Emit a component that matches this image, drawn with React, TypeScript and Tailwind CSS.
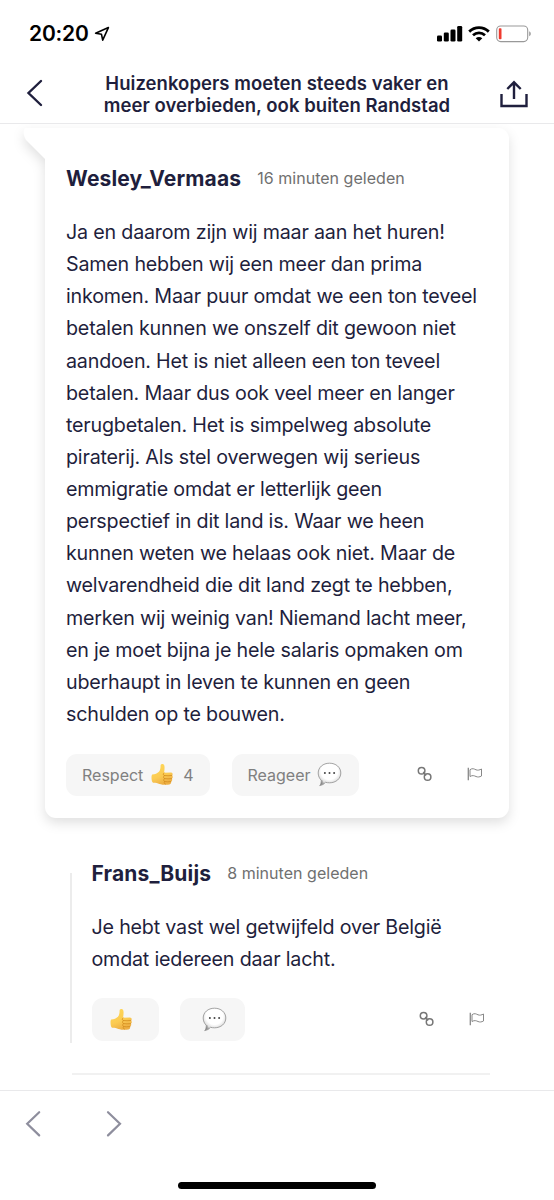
import type { ReactNode } from "react";

const article = ["Huizenkopers moeten steeds vaker en", "meer overbieden, ook buiten Randstad"];

const mainComment = [
  "Ja en daarom zijn wij maar aan het huren!",
  "Samen hebben wij een meer dan prima",
  "inkomen. Maar puur omdat we een ton teveel",
  "betalen kunnen we onszelf dit gewoon niet",
  "aandoen. Het is niet alleen een ton teveel",
  "betalen. Maar dus ook veel meer en langer",
  "terugbetalen. Het is simpelweg absolute",
  "piraterij. Als stel overwegen wij serieus",
  "emmigratie omdat er letterlijk geen",
  "perspectief in dit land is. Waar we heen",
  "kunnen weten we helaas ook niet. Maar de",
  "welvarendheid die dit land zegt te hebben,",
  "merken wij weinig van! Niemand lacht meer,",
  "en je moet bijna je hele salaris opmaken om",
  "uberhaupt in leven te kunnen en geen",
  "schulden op te bouwen.",
];

const reply = ["Je hebt vast wel getwijfeld over België", "omdat iedereen daar lacht."];

function ThumbsUp() {
  return (
    <svg width="23" height="23" viewBox="0 0 24 24" className="shrink-0">
      <defs>
        <linearGradient id="thumb" x1="0" y1="0" x2="0.4" y2="1">
          <stop offset="0" stopColor="#ffd95a" />
          <stop offset="0.65" stopColor="#fbcb52" />
          <stop offset="1" stopColor="#eeb045" />
        </linearGradient>
      </defs>
      <path
        d="M1.2 12.1C4.2 11.8 6.6 11 8.3 9.2C9.8 7.6 10 5 10 2.7C10.2.5 13.6.6 14 3C14.4 5.1 14 7.9 13.6 10.1L20.7 9.9C22.8 9.9 23.2 12.3 21.8 13C23.2 13.8 23 15.9 21.6 16.3C22.6 17.2 22.2 19 20.8 19.4C21.5 20.6 20.7 22.1 19.2 22.4C16.3 22.8 11.9 22.8 8.8 21.8C6.6 21.1 4.7 20.6 2.1 20.7C.4 19.5.1 13.3 1.2 12.1Z"
        fill="url(#thumb)"
      />
      <path
        d="M14 13.1C16.3 13.5 19.1 13.3 21.8 13M14 16.3C16.4 16.7 19.1 16.6 21.6 16.3M14.2 19.4C16.2 19.8 18.6 19.7 20.8 19.4M13.7 10.3C12.4 11.3 12.5 12.6 14 13.1C12.7 14 12.9 15.6 14 16.3C13 17.1 13.1 18.8 14.2 19.4C13.4 20.4 13.8 21.5 15 22"
        fill="none"
        stroke="#d28b1c"
        strokeWidth="0.8"
        strokeLinecap="round"
      />
    </svg>
  );
}

function SpeechBubble() {
  return (
    <svg width="25" height="25" viewBox="0 0 25 25" className="shrink-0">
      <defs>
        <radialGradient id="bubble" cx="0.5" cy="0.36" r="0.62">
          <stop offset="0.6" stopColor="#fff" />
          <stop offset="0.85" stopColor="#e0e0e0" />
          <stop offset="1" stopColor="#a0a0a0" />
        </radialGradient>
      </defs>
      <path
        d="M12.5 1.2C19 1.2 23.8 5.4 23.8 11C23.8 16.7 19 20.8 12.5 20.8C11 20.8 9.7 20.6 8.5 20.3C7 22 5.2 23.2 2.7 23.6C3.9 22.3 4.4 20.3 4.2 18.2C2.4 16.4 1.2 14 1.2 11C1.2 5.4 6 1.2 12.5 1.2Z"
        fill="url(#bubble)"
        stroke="#999"
        strokeWidth="0.9"
      />
      <path d="M4.9 18.3C5.2 20 4.8 21.7 3.8 22.9" fill="none" stroke="#888" strokeWidth="1" />
      <circle cx="7.9" cy="11" r="1" fill="#444" />
      <circle cx="12.5" cy="11" r="1" fill="#444" />
      <circle cx="17.1" cy="11" r="1" fill="#444" />
    </svg>
  );
}

function LinkIcon() {
  return (
    <svg width="16" height="16" viewBox="0 0 16 16" fill="none" stroke="#777" strokeWidth="1.5">
      <circle cx="4.6" cy="4.7" r="3.3" />
      <circle cx="10.6" cy="11" r="3.3" />
      <path d="M6.2 6.1L9.1 9.6" strokeWidth="1.5" />
    </svg>
  );
}

function FlagIcon() {
  return (
    <svg width="16" height="16" viewBox="0 0 16 16" fill="none" stroke="#888" strokeWidth="1">
      <path d="M1.3 1.8V14.2" strokeWidth="1.3" />
      <path d="M3 3.7C5.5 1.8 7.2 3 9 3.8C10.8 4.5 12.5 4.1 14.5 3V10C12.5 11.1 10.8 11.3 9 10.5C7.2 9.7 5.5 9 3 10.5Z" />
    </svg>
  );
}

function Lines({ lines }: { lines: string[] }) {
  return (
    <p className="text-[19.7px] leading-[32.13px] tracking-[-0.2px]">
      {lines.map((line) => (
        <span key={line} className="block whitespace-nowrap">
          {line}
        </span>
      ))}
    </p>
  );
}

function Author({ name, time }: { name: string; time: string }) {
  return (
    <div className="flex h-8 items-center gap-4 whitespace-nowrap">
      <h2 className="text-[21px] font-bold tracking-[0.15px]">{name}</h2>
      <span className="mt-[-2px] text-[16px] tracking-[0.03px] text-[#707070]">{time}</span>
    </div>
  );
}

function Pill({ className, children }: { className: string; children: ReactNode }) {
  return (
    <button
      className={`flex h-[42.5px] items-center rounded-[11px] bg-[#f6f6f6] text-[16px] text-[#808080] ${className}`}
    >
      {children}
    </button>
  );
}

function StatusBar() {
  return (
    <div className="flex h-[67px] items-center justify-between pr-[22.5px] pl-[29px] text-black">
      <div className="flex items-center gap-[5px]">
        <span className="text-[21px] font-semibold tracking-[-0.2px]">20:20</span>
        <svg width="16" height="16" viewBox="0 0 16 16" fill="none" stroke="currentColor" strokeWidth="1.6">
          <path d="M14.4 1.6L1.6 7.2L7.5 8.3L8.7 14.2Z" strokeLinejoin="round" />
        </svg>
      </div>
      <div className="flex items-center">
        <svg width="26" height="17" viewBox="0 0 26 17" fill="currentColor">
          <rect x="0" y="10.5" width="5" height="6" rx="1.3" />
          <rect x="6.8" y="7.5" width="5" height="9" rx="1.3" />
          <rect x="13.5" y="4.5" width="5" height="12" rx="1.3" />
          <rect x="20.2" y="1" width="5" height="15.5" rx="1.3" />
        </svg>
        <svg width="22" height="16" viewBox="0 0 22 16" fill="none" stroke="currentColor" strokeWidth="2.8" className="mr-[6px] ml-[5px]">
          <path d="M1.2 5.6C6.8.4 15.2.4 20.8 5.6" />
          <path d="M5 9.2C8.5 6 13.5 6 17 9.2" />
          <path d="M11 15.6L7.7 12.2C9.6 10.7 12.4 10.7 14.3 12.2Z" fill="currentColor" stroke="none" />
        </svg>
        <svg width="36" height="18" viewBox="0 0 36 18" fill="none">
          <rect x="0.7" y="1" width="31" height="15.6" rx="4" stroke="#999" strokeWidth="1.1" />
          <rect x="2.8" y="3.3" width="2.7" height="11" rx="0.8" fill="#ef3a2f" />
          <path d="M33.2 6.3C35.3 7.3 35.3 10.3 33.2 11.3Z" fill="#999" />
        </svg>
      </div>
    </div>
  );
}

export default function App() {
  return (
    <div className="flex h-[1200px] w-[554px] flex-col overflow-hidden bg-white font-[Inter,'Liberation_Sans',sans-serif] text-[#1f1f3d]">
      <StatusBar />

      <header className="flex h-[57px] shrink-0 items-center justify-between border-b border-[#e9e9eb] px-[26px]">
        <svg width="17" height="28" viewBox="0 0 17 28" fill="none" stroke="currentColor" strokeWidth="2.4" className="mt-[-4px]">
          <path d="M15 2L2.5 14L15 26" strokeLinecap="round" />
        </svg>
        <h1 className="mt-[-3px] ml-[11px] text-center text-[18.5px] leading-[22px] font-semibold tracking-[0.04px]">
          {article.map((line) => (
            <span key={line} className="block whitespace-nowrap">
              {line}
            </span>
          ))}
        </h1>
        <svg width="28" height="28" viewBox="0 0 28 28" fill="none" stroke="currentColor" strokeWidth="2.4" className="mt-[-3px]">
          <path d="M1.5 14V26H26.5V14" />
          <path d="M14 19V3M7.3 9L14 2.3L20.7 9" />
        </svg>
      </header>

      {/* Highlighted comment */}
      <main className="flex-1 overflow-hidden pt-[4px]">
        {/* One filter on the whole card, so the tail and the body share a single shadow */}
        <article className="relative mr-[45px] ml-[44.5px] h-[689.5px] rounded-r-[11px] rounded-bl-[11px] bg-white px-[21.5px] pt-[35px] drop-shadow-[0_5px_6px_rgba(0,0,0,0.12)]">
          <svg width="44" height="36" viewBox="0 0 44 36" className="absolute top-0 left-[-43px]">
            <path d="M23 0H44V32L24 12Q20 5 23 0Z" fill="#fff" />
          </svg>
          <Author name="Wesley_Vermaas" time="16 minuten geleden" />
          <div className="mt-[21px]">
            <Lines lines={mainComment} />
          </div>
          <div className="mt-[23.5px] flex items-center">
            <Pill className="w-[144px] pl-[16px]">
              <span className="mr-[7.5px]">Respect</span>
              <ThumbsUp />
              <span className="ml-[9.5px]">4</span>
            </Pill>
            <Pill className="ml-[21.5px] w-[127.5px] pl-[16px]">
              <span className="mr-[6.5px]">Reageer</span>
              <SpeechBubble />
            </Pill>
            <div className="mt-[-2px] ml-[58px] flex gap-[34px]">
              <LinkIcon />
              <FlagIcon />
            </div>
          </div>
        </article>

        {/* Reply */}
        <article className="mt-[55px] mr-[64px] ml-[70px] h-[202px]">
          <div className="flex h-[170px] flex-col border-l-2 border-[#ececec] pl-[19.5px]">
            <div className="mt-[-15px]">
              <Author name="Frans_Buijs" time="8 minuten geleden" />
            </div>
            <div className="mt-[21px]">
              <Lines lines={reply} />
            </div>
            <div className="mt-[23.5px] flex items-center">
              <Pill className="w-[67px] pl-[18px]">
                <ThumbsUp />
              </Pill>
              <Pill className="ml-[21px] w-[65px] pl-[22px]">
                <SpeechBubble />
              </Pill>
              <div className="mt-[-1px] ml-[174px] flex gap-[34.5px]">
                <LinkIcon />
                <FlagIcon />
              </div>
            </div>
          </div>
          <div className="mt-[30px] ml-[2px] h-[2px] bg-[#f1f1f1]" />
        </article>
      </main>

      <footer className="flex h-[110px] shrink-0 flex-col border-t border-[#e9e9eb] pt-[19px]">
        <div className="flex gap-[63px] pl-[25px] text-[#8e8e9d]">
          <svg width="17" height="27" viewBox="0 0 17 27" fill="none" stroke="currentColor" strokeWidth="2.2">
            <path d="M14.2 2.2L2.2 13.8L14.2 25.4" strokeLinecap="round" />
          </svg>
          <svg width="17" height="27" viewBox="0 0 17 27" fill="none" stroke="currentColor" strokeWidth="2.2">
            <path d="M3 2.2L15 13.8L3 25.4" strokeLinecap="round" />
          </svg>
        </div>
        <div className="mt-[45px] ml-[178px] h-[7px] w-[198px] rounded-full bg-black" />
      </footer>
    </div>
  );
}
